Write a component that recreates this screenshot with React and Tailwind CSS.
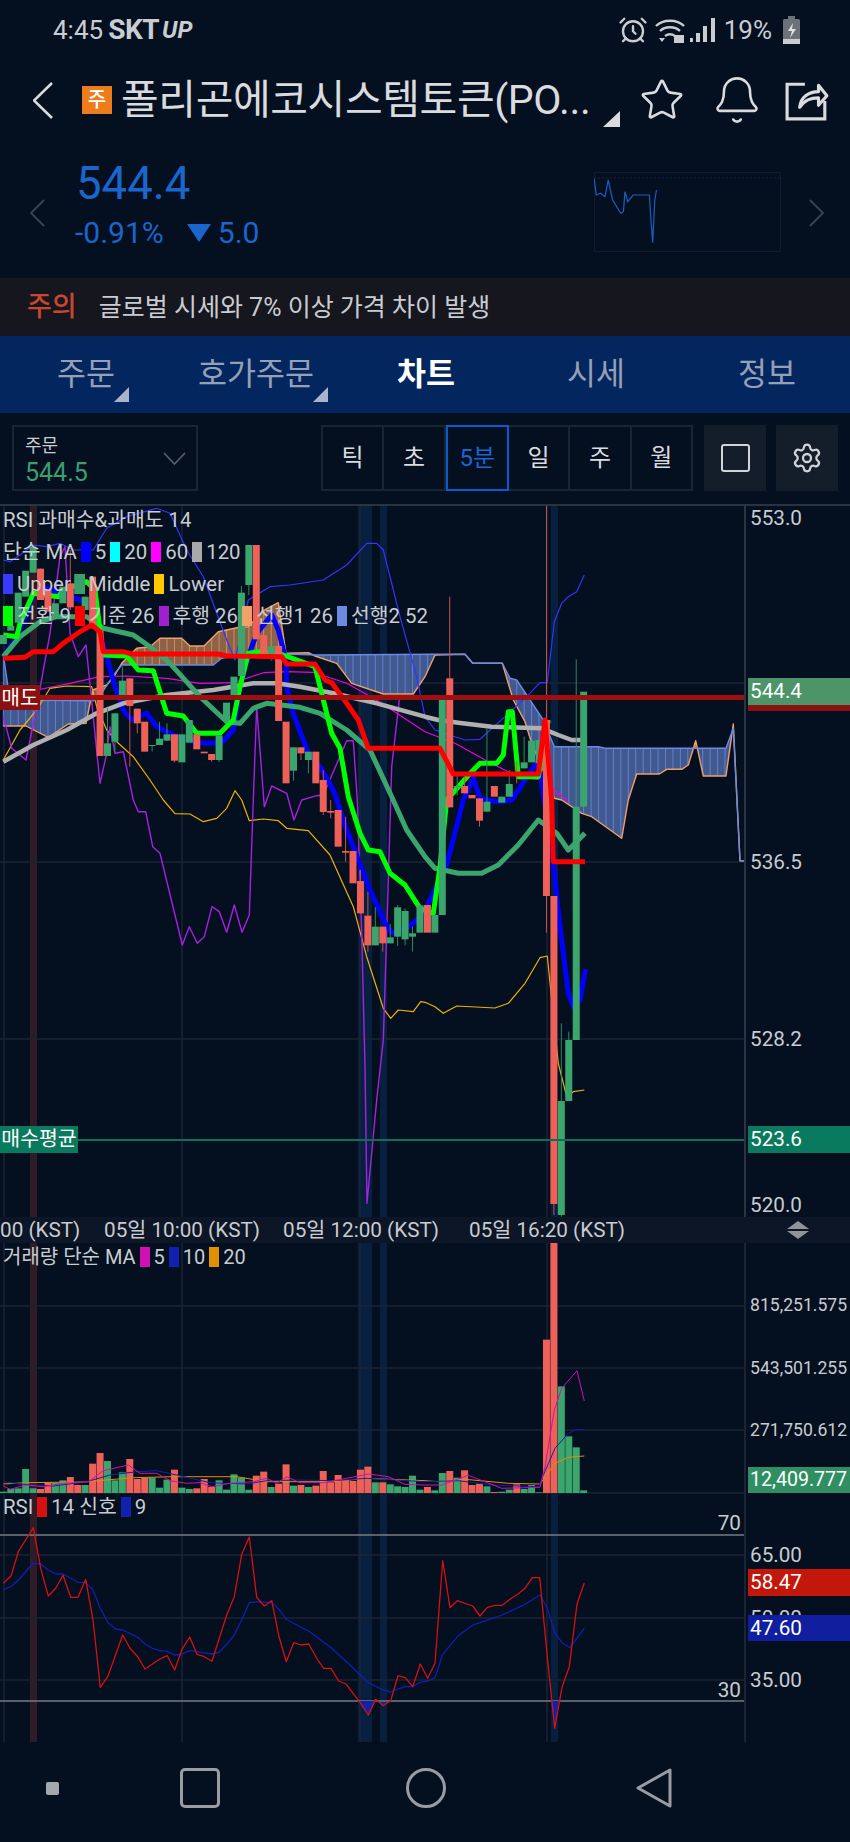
import { AlarmClock, Bell, Settings, Star } from "lucide-react";

const GREEN = "#3ba56e";
const RED = "#ee6158";

// chart data was read off 3x crops: page x = zx / 3, page y = 500 + zy / 3
const r = (pts) => pts.map(([x, y]) => [x + 1275, y]);
const slotX = (i) => 10 + 22.32 * i;
const toPoints = (pts, originY = 500) =>
  pts.map(([x, y]) => `${(x / 3).toFixed(1)},${(originY + y / 3).toFixed(1)}`).join(" ");

function yAt(pts, x) {
  if (x <= pts[0][0]) return pts[0][1];
  for (let i = 1; i < pts.length; i++) {
    if (x <= pts[i][0]) {
      const [x0, y0] = pts[i - 1];
      const [x1, y1] = pts[i];
      return y0 + ((y1 - y0) * (x - x0)) / (x1 - x0 || 1);
    }
  }
  return pts[pts.length - 1][1];
}

const lead1 = [
  [10, 678], [78, 678], [145, 712], [205, 672], [258, 670], [278, 570], [320, 555], [345, 525], [365, 490], [410, 445],
  [450, 440], [480, 415], [545, 415], [570, 438], [612, 438], [655, 395], [718, 382], [745, 380], [790, 332], [835, 308],
  [858, 460], [925, 458], [945, 468], [1010, 490], [1055, 550], [1150, 582], [1240, 582], [1275, 530],
  ...r([[30, 465], [120, 463], [143, 490], [232, 490], [265, 600], [300, 665], [320, 730], [388, 895], [410, 900], [470, 940], [500, 950], [590, 1015], [610, 900], [635, 822], [703, 822], [725, 808], [770, 808], [790, 795], [812, 722], [835, 828], [903, 828], [925, 672], [945, 1082], [958, 1082]]),
];
const lead2 = [
  [10, 465], [30, 600], [280, 602], [310, 572], [345, 520], [365, 495], [640, 495], [665, 475], [720, 465], [860, 462], [950, 465],
  ...r([[30, 463], [120, 463], [143, 490], [232, 490], [255, 535], [275, 540], [315, 600], [355, 660], [388, 740], [520, 740], [540, 745], [903, 745], [925, 685], [945, 1082], [958, 1082]]),
];

const ma5 = [
  [10, 470], [45, 420], [80, 340], [100, 285], [130, 262], [210, 290], [240, 300], [270, 310], [300, 400], [320, 470], [345, 560], [370, 630], [395, 660], [440, 640], [470, 680], [520, 705], [580, 725], [620, 730], [665, 728], [700, 690], [720, 560], [745, 470], [770, 400], [815, 345], [835, 390], [858, 480], [860, 560], [880, 640], [925, 760], [960, 800], [1000, 870], [1040, 990], [1075, 1080], [1110, 1170], [1160, 1280], [1180, 1300], [1230, 1278], [1260, 1250],
  ...r([[0, 1230], [65, 1095], [115, 900], [145, 835], [165, 895], [215, 905], [260, 900], [340, 780], [385, 1090], [405, 1280], [430, 1480], [445, 1520], [465, 1500], [482, 1408]]),
];
const tenkan = [
  [10, 405], [50, 410], [60, 370], [100, 280], [175, 290], [190, 270], [260, 245], [285, 270], [300, 390], [310, 465], [380, 468], [415, 510], [460, 512], [500, 640], [550, 648], [590, 700], [660, 700], [700, 660], [720, 560], [745, 460], [780, 455], [810, 458], [850, 465], [945, 500], [975, 620], [995, 700], [1020, 745], [1045, 890], [1080, 1000], [1105, 1050], [1140, 1055], [1170, 1120], [1215, 1155], [1260, 1225],
  ...r([[25, 1240], [45, 1100], [65, 900], [140, 815], [165, 790], [215, 790], [235, 765], [250, 635], [262, 635], [280, 830], [340, 830], [370, 660]]),
];
const kijun = [
  [10, 475], [75, 472], [100, 455], [160, 455], [190, 430], [240, 395], [275, 375], [300, 395], [310, 455], [370, 455], [395, 462], [655, 462], [680, 468], [845, 470], [860, 492], [945, 492], [975, 540], [995, 548], [1040, 610], [1075, 660], [1105, 745],
  ...r([[45, 745], [85, 822], [340, 822], [360, 660], [380, 900], [385, 1085], [480, 1085]]),
];
const ma20 = [
  [10, 470], [60, 410], [120, 365], [170, 350], [260, 350], [310, 385], [400, 405], [450, 440], [510, 490], [600, 590], [680, 665], [720, 670], [760, 625], [800, 610], [900, 622], [960, 640], [1040, 690], [1110, 750], [1175, 890], [1220, 990], [1275, 1070],
  ...r([[30, 1105], [100, 1120], [170, 1120], [220, 1095], [280, 1035], [340, 960], [395, 1000], [430, 1050], [480, 1000]]),
];
const ma120 = [
  [10, 785], [100, 735], [200, 690], [290, 640], [370, 610], [500, 585], [640, 570], [760, 550], [830, 550], [900, 560], [1000, 580], [1130, 610], [1275, 650],
  ...r([[40, 660], [100, 668], [200, 680], [350, 685], [400, 705], [440, 720], [468, 720]]),
];
const ma60 = [
  [10, 590], [110, 570], [210, 550], [300, 530], [380, 528], [500, 535], [600, 550], [700, 548], [790, 518], [860, 515], [940, 517], [1040, 550], [1130, 600],
  ...r([[0, 695], [90, 730], [190, 785], [280, 830], [350, 840], [400, 880], [430, 905]]),
];
const upper = [
  [10, 180], [30, 185], [60, 165], [100, 135], [140, 140], [180, 130], [220, 150], [280, 150], [320, 85], [380, 50], [470, 25], [510, 40], [560, 150], [610, 230], [680, 420], [705, 480], [745, 300], [810, 260], [870, 255], [970, 240], [1040, 195], [1100, 130], [1130, 130], [1150, 150], [1200, 350], [1250, 530],
  ...r([[0, 650], [30, 690], [90, 710], [120, 720], [165, 718], [300, 595], [345, 548], [367, 548], [388, 365], [410, 310], [430, 290], [455, 275], [478, 225]]),
];
const lower = [
  [10, 780], [60, 690], [110, 630], [150, 565], [200, 558], [275, 560], [290, 620], [320, 690], [350, 725], [400, 770], [450, 840], [490, 900], [525, 941], [570, 942], [610, 965], [650, 955], [680, 925], [705, 872], [725, 900], [748, 962], [790, 957], [835, 962], [860, 985], [925, 992], [990, 1065], [1060, 1220], [1100, 1370], [1150, 1525], [1172, 1555], [1195, 1530], [1240, 1535], [1262, 1505],
  ...r([[0, 1507], [30, 1520], [55, 1540], [95, 1518], [210, 1524], [250, 1510], [300, 1450], [345, 1373], [367, 1368], [380, 1500], [400, 1690], [425, 1790], [445, 1775], [478, 1770]]),
];
const lagging = [
  [10, 650], [35, 745], [78, 780], [110, 620], [150, 400], [180, 170], [195, 140], [210, 400], [235, 470], [258, 435], [300, 850], [318, 770], [330, 680], [345, 760], [370, 755], [400, 900], [415, 935], [437, 935], [458, 1040], [480, 1060], [547, 1335], [568, 1280], [592, 1330], [613, 1310], [636, 1220], [658, 1235], [680, 1297], [703, 1215], [726, 1297], [748, 1245], [760, 900], [770, 620], [793, 920], [815, 858], [860, 880], [882, 960], [905, 900], [950, 887], [970, 885], [1040, 722], [1060, 722], [1072, 900], [1085, 1300], [1095, 1700], [1101, 2110], [1130, 1800], [1150, 1620], [1160, 1300], [1175, 800], [1198, 600],
];

// [bodyTop, bodyBottom, colour, wickTop, wickBottom]
const candles = [
  [405, 432, "g"], [378, 392, "g"], [278, 368, "g"], [212, 290, "g"], [140, 218, "g"], [206, 300, "r", 206, 300], [270, 335, "r"], [310, 350, "g"], [260, 310, "g"], [250, 322, "r", 150, 330],
  [222, 282, "g"], [290, 330, "g"], [230, 385, "r"], [392, 768, "r"], [730, 768, "g", 625, 768], [640, 725, "g", 640, 755], [542, 585, "g", 500, 590], [535, 618, "r", 535, 800], [626, 670, "r", 626, 700], [665, 755, "r"],
  [735, 738, "g", 735, 755], [716, 735, "g", 665, 735], [703, 722, "g", 670, 722], [703, 782, "r", 703, 787], [703, 787, "g"], [660, 728, "g"], [703, 748, "r"], [755, 760, "r"], [762, 780, "r", 762, 785], [706, 780, "g", 706, 786],
  [608, 660, "g"], [530, 585, "g"], [278, 528, "g", 258, 528], [135, 255, "g", 135, 285], [135, 418, "r"], [405, 470, "r"], [438, 470, "g", 438, 482], [438, 663, "r"], [665, 850, "r"], [742, 812, "g", 742, 842],
  [742, 760, "r", 742, 780], [755, 780, "g", 755, 820], [755, 850, "r"], [840, 936, "r", 810, 945], [933, 938, "r", 900, 955], [930, 1040, "r"], [1053, 1058, "r", 950, 1085], [1053, 1150, "r"], [1143, 1240, "r", 1110, 1240], [1247, 1336, "r", 1175, 1355],
  [1280, 1336, "g", 1222, 1336], [1280, 1330, "r", 1280, 1355], [1312, 1330, "g", 1272, 1330], [1222, 1310, "g", 1215, 1338], [1233, 1318, "g", 1225, 1336], [1300, 1310, "g", 1280, 1355], [1216, 1298, "g"], [1215, 1298, "r"], [1245, 1298, "g"], [600, 1245, "g"],
  [535, 922, "r", 290, 922], [858, 862, "g", 820, 885], [858, 880, "r", 825, 880], [885, 895, "r"], [895, 962, "r", 895, 980], [905, 935, "g", 685, 935], [858, 890, "r"], [890, 908, "g"], [852, 890, "g", 810, 890], [820, 824, "r", 785, 850],
  [787, 805, "g", 710, 805], [722, 787, "g"], [720, 790, "g"], [660, 1188, "r", 18, 1298], [1188, 2112, "r", 1188, 2145], [1803, 2145, "g", 1570, 2150], [1620, 1803, "g", 1595, 1803], [920, 1620, "g", 478, 1620], [575, 920, "g"],
];

const volumeHeights = [
  4, 12, 14, 72, 14, 12, 32, 30, 38, 48, 24, 24, 88, 120, 96, 38, 62, 102, 42, 45, 46, 16, 40, 70, 16, 12, 14, 42, 18, 38,
  10, 56, 46, 10, 52, 64, 18, 28, 86, 22, 24, 18, 22, 66, 32, 54, 38, 36, 70, 79, 32, 32, 26, 20, 18, 52, 10,
  18, 8, 60, 66, 46, 68, 24, 28, 20, 3, 4, 10, 26, 12, 24, 2, 460, 760, 320, 170, 137, 8,
];
const volumeColours = "gggggrrggrrgrrgggrrrgggrggrrrgggggrrgrrgrgrrrrrrrrgrgggggrggrgrrrgrggrgggrrgggg";

const volMa5 = [
  [10, 858], [30, 868], [80, 855], [130, 860], [190, 850], [265, 845], [310, 812], [385, 795], [420, 820], [470, 820], [510, 842], [560, 850], [600, 848], [635, 860], [690, 850], [760, 845], [800, 835], [830, 850], [860, 830], [900, 848], [970, 848], [1040, 835], [1105, 822], [1165, 830], [1215, 853],
  ...r([[0, 855], [50, 855], [130, 826], [230, 865], [345, 862], [360, 800], [388, 630], [410, 565], [456, 512], [478, 603]]),
];
const volMa10 = [
  [10, 845], [60, 852], [160, 858], [260, 845], [330, 825], [410, 815], [470, 812], [530, 825], [630, 848], [740, 852], [800, 842], [900, 840], [1000, 842], [1100, 835],
  ...r([[0, 845], [100, 842], [200, 855], [340, 860], [390, 745], [430, 700], [456, 688], [478, 689]]),
];
const volMa20 = [
  [10, 852], [80, 848], [250, 846], [400, 833], [520, 830], [710, 830], [800, 845], [1000, 845], [1100, 835],
  ...r([[0, 842], [40, 845], [120, 838], [250, 850], [345, 852], [390, 790], [430, 772], [478, 768]]),
];

const rsiLine = [
  [10, 280], [33, 258], [55, 185], [100, 113], [122, 235], [145, 318], [167, 295], [189, 256], [212, 322], [234, 322], [257, 268], [279, 390], [301, 592], [323, 560], [368, 435], [390, 475], [413, 500], [435, 537], [480, 507], [502, 497], [524, 540], [546, 478], [569, 441], [591, 493], [613, 500], [636, 514], [680, 375], [703, 320], [725, 193], [748, 141], [770, 322], [793, 348], [815, 332], [837, 440], [859, 515], [881, 458], [903, 465], [926, 462], [950, 505], [971, 535], [993, 535], [1016, 573], [1038, 582], [1082, 640], [1105, 675], [1127, 628], [1150, 647], [1172, 632], [1194, 557], [1216, 563], [1238, 590], [1261, 522],
  ...r([[8, 565], [30, 520], [53, 212], [75, 353], [97, 332], [143, 348], [165, 378], [187, 352], [210, 346], [232, 346], [255, 328], [278, 313], [300, 295], [322, 263], [344, 263], [367, 500], [389, 715], [411, 592], [433, 530], [456, 343], [478, 279]]),
];
const rsiSignal = [
  [10, 298], [33, 290], [55, 270], [100, 220], [122, 222], [145, 240], [167, 252], [189, 252], [234, 277], [257, 278], [279, 300], [301, 355], [323, 397], [346, 417], [368, 420], [413, 442], [435, 462], [457, 475], [480, 482], [502, 484], [524, 495], [546, 492], [569, 482], [591, 485], [636, 492], [658, 486], [680, 463], [703, 435], [725, 390], [748, 338], [770, 335], [815, 338], [837, 358], [859, 388], [903, 412], [926, 423], [993, 473], [1050, 525], [1105, 578], [1150, 600], [1172, 606], [1194, 597], [1216, 590], [1238, 590], [1261, 577],
  ...r([[8, 573], [30, 563], [53, 493], [100, 437], [143, 405], [165, 398], [232, 375], [300, 343], [345, 315], [367, 355], [389, 428], [411, 458], [435, 473], [478, 415]]),
];

function cloudRuns() {
  const runs = [];
  let current = null;
  for (let x = 10; x <= 2233; x += 3) {
    const a = yAt(lead1, x);
    const b = yAt(lead2, x);
    const orange = a < b;
    if (!current || current.orange !== orange) {
      current = { orange, top: [], bottom: [] };
      runs.push(current);
    }
    current.top.push([x, Math.min(a, b)]);
    current.bottom.push([x, Math.max(a, b)]);
  }
  return runs;
}

// bands and vertical grid are shared by all three panes
function PaneBackdrop({ top, height }) {
  return (
    <g>
      <rect x="30" y={top} width="7" height={height} fill="#2f1c26" />
      <rect x="358" y={top} width="14" height={height} fill="#08203f" />
      <rect x="380" y={top} width="7" height={height} fill="#08203f" />
      <rect x="551" y={top} width="7" height={height} fill="#08203f" />
      {[4, 182, 360, 547].map((x) => (
        <line key={x} x1={x} x2={x} y1={top} y2={top + height} stroke="#1a2433" strokeWidth="1.5" />
      ))}
    </g>
  );
}

function Line({ pts, color, width = 1, origin = 500 }) {
  return <polyline points={toPoints(pts, origin)} fill="none" stroke={color} strokeWidth={width} strokeLinejoin="round" />;
}

function MainPlot() {
  const runs = cloudRuns();
  return (
    <svg className="block" width="744" height="711" viewBox="0 506 744 711">
      <PaneBackdrop top={506} height={711} />
      {[683, 862, 1039].map((y) => (
        <line key={y} x1="0" x2="744" y1={y} y2={y} stroke="#1a2433" strokeWidth="1.5" />
      ))}
      {runs.map((run, i) => (
        <polygon
          key={i}
          points={toPoints([...run.top, ...[...run.bottom].reverse()])}
          fill={run.orange ? "#8c6248" : "#41598f"}
        />
      ))}
      {Array.from({ length: 100 }, (_, i) => {
        const x = slotX(i);
        const a = yAt(lead1, x);
        const b = yAt(lead2, x);
        return (
          <line
            key={i}
            x1={x / 3}
            x2={x / 3}
            y1={500 + a / 3}
            y2={500 + b / 3}
            stroke={a < b ? "#e09a60" : "#6b8ae0"}
            strokeWidth="0.8"
          />
        );
      })}
      <Line pts={lead1} color="#f0a068" width={1.4} />
      <Line pts={lead2} color="#6b8ae0" width={1.4} />
      <Line pts={upper} color="#3434ff" width={1.2} />
      <Line pts={ma60} color="#f000e0" width={1.2} />
      <Line pts={lower} color="#f0b000" width={1.2} />
      <Line pts={lagging} color="#a820e0" width={1.4} />
      <Line pts={ma5} color="#0000ff" width={5} />
      <Line pts={ma120} color="#b0b0b0" width={4.5} />
      <Line pts={ma20} color={GREEN} width={5} />
      <Line pts={tenkan} color="#00ff00" width={5} />
      {candles.map(([top, bottom, c, wTop, wBottom], i) => {
        const x = slotX(i) / 3;
        const color = c === "g" ? GREEN : RED;
        return (
          <g key={i}>
            {wTop !== undefined && (
              <line x1={x} x2={x} y1={500 + wTop / 3} y2={500 + wBottom / 3} stroke={c === "g" ? "#2f8a5c" : "#c9524a"} />
            )}
            <rect x={x - 3.5} y={500 + top / 3} width="7" height={(bottom - top) / 3} fill={color} />
          </g>
        );
      })}
      <Line pts={kijun} color="#ff0000" width={5} />
      <rect x="0" y="695" width="744" height="5" fill="#a00f0f" />
      <rect x="0" y="1139" width="744" height="2" fill="#0f6e5a" />
    </svg>
  );
}

function VolumePlot() {
  return (
    <svg className="block" width="744" height="252" viewBox="0 1243 744 252">
      <PaneBackdrop top={1243} height={252} />
      {[1306, 1368, 1430, 1493].map((y) => (
        <line key={y} x1="0" x2="744" y1={y} y2={y} stroke="#1a2433" strokeWidth="1.5" />
      ))}
      {volumeHeights.map((h, i) => (
        <rect
          key={i}
          x={slotX(i) / 3 - 3.5}
          y={1493 - h / 3}
          width="7"
          height={h / 3}
          fill={volumeColours[i] === "g" ? GREEN : RED}
        />
      ))}
      <Line pts={volMa20} color="#e09000" origin={1200} />
      <Line pts={volMa10} color="#1020b0" origin={1200} />
      <Line pts={volMa5} color="#d010b0" origin={1200} />
    </svg>
  );
}

function RsiPlot() {
  return (
    <svg className="block" width="744" height="247" viewBox="0 1495 744 247">
      <PaneBackdrop top={1495} height={247} />
      {[1555, 1618, 1680].map((y) => (
        <line key={y} x1="0" x2="744" y1={y} y2={y} stroke="#1a2433" strokeWidth="1.5" />
      ))}
      <line x1="0" x2="744" y1="1535" y2="1535" stroke="#777c82" strokeWidth="1.5" />
      <line x1="0" x2="744" y1="1701" y2="1701" stroke="#777c82" strokeWidth="1.5" />
      <polygon points={toPoints([[1075, 633], [1105, 675], [1127, 633]], 1490)} fill="#1122aa" />
      <polygon points={toPoints([[1140, 636], [1150, 647], [1165, 636]], 1490)} fill="#1122aa" />
      <polygon points={toPoints(r([[378, 633], [389, 715], [402, 633]]), 1490)} fill="#1122aa" />
      <Line pts={rsiSignal} color="#1020b0" width={1.3} origin={1490} />
      <Line pts={rsiLine} color="#d81010" width={1.3} origin={1490} />
    </svg>
  );
}

function Swatch({ className }) {
  return <span className={`inline-block h-[20px] w-[10px] shrink-0 ${className}`} />;
}

function ChartLegend() {
  return (
    <div className="absolute left-[3px] top-[4px] flex flex-col gap-[12px] text-[20.4px] leading-[20px] text-[#c8ccd0]">
      <div className="h-[20px]">RSI 과매수&과매도 14</div>
      <div className="flex h-[20px] items-center gap-[4px]">
        <span>단순 MA</span>
        <Swatch className="bg-[#0000ff]" />
        <span>5</span>
        <Swatch className="bg-[#00ffff]" />
        <span>20</span>
        <Swatch className="bg-[#ff00ff]" />
        <span>60</span>
        <Swatch className="bg-[#a9a9a9]" />
        <span>120</span>
      </div>
      <div className="flex h-[20px] items-center gap-[4px]">
        <Swatch className="bg-[#3a3aff]" />
        <span>Upper</span>
        <Swatch className="bg-[#3a9e6e]" />
        <span>Middle</span>
        <Swatch className="bg-[#ffc800]" />
        <span>Lower</span>
      </div>
      <div className="flex h-[20px] items-center gap-[4px]">
        <Swatch className="bg-[#00ff00]" />
        <span>전환 9</span>
        <Swatch className="bg-[#ff0000]" />
        <span>기준 26</span>
        <Swatch className="bg-[#a020d0]" />
        <span>후행 26</span>
        <Swatch className="bg-[#f0a068]" />
        <span>선행1 26</span>
        <Swatch className="bg-[#6b8ae0]" />
        <span>선행2 52</span>
      </div>
    </div>
  );
}

function AxisLabel({ className, children }) {
  return (
    <span className={`absolute left-[4px] -translate-y-1/2 whitespace-nowrap leading-none text-[#c8ccd0] ${className}`}>
      {children}
    </span>
  );
}

function AxisTag({ className, children }) {
  return (
    <div className={`absolute left-[2px] right-0 flex items-center pl-[2px] leading-none text-white ${className}`}>
      {children}
    </div>
  );
}

function Chevron({ className, width, height, color, strokeWidth, flip }) {
  return (
    <svg className={`shrink-0 ${className}`} width={width} height={height} viewBox={`0 0 ${width} ${height}`} fill="none" stroke={color} strokeWidth={strokeWidth}>
      <polyline
        points={
          flip
            ? `1,1 ${width - 1},${height / 2} 1,${height - 1}`
            : `${width - 1},1 1,${height / 2} ${width - 1},${height - 1}`
        }
      />
    </svg>
  );
}

function StatusBar() {
  return (
    <div className="flex h-[60px] items-center pl-[53px] pr-[50px] text-[#c9ccd1]">
      <span className="text-[26px]">4:45</span>
      <span className="ml-[5px] text-[28px] font-bold tracking-[-0.5px]">SKT</span>
      <span className="ml-[3px] text-[24px] font-bold italic">UP</span>
      <div className="ml-auto flex items-center">
        <AlarmClock size={30} strokeWidth={1.9} />
        <svg className="ml-[6px]" width="32" height="28" viewBox="0 0 32 28" fill="none" stroke="currentColor" strokeWidth="2.4">
          <path d="M2 10c7-7 21-7 28 0" />
          <path d="M6 15c5-5 15-5 20 0" />
          <path d="M11 20c3-2 7-2 10 0" />
          <rect x="20" y="19" width="10" height="8" fill="currentColor" stroke="none" />
          <path d="M5 22h6l-3 4z" fill="currentColor" stroke="none" />
        </svg>
        <svg className="ml-[4px]" width="26" height="26" viewBox="0 0 26 26" fill="currentColor">
          <rect x="0" y="21" width="3" height="4" />
          <rect x="6" y="16" width="4" height="9" />
          <rect x="13" y="9" width="4" height="16" />
          <rect x="21" y="1" width="4" height="24" />
        </svg>
        <span className="ml-[8px] text-[26px]">19%</span>
        <svg className="ml-[11px]" width="17" height="28" viewBox="0 0 17 28">
          <rect x="5" y="0" width="7" height="3" fill="#6d7178" />
          <rect x="0" y="3" width="17" height="25" rx="1.5" fill="#6d7178" />
          <rect x="0" y="23" width="17" height="5" fill="#c9ccd1" />
          <path d="M10 7l-5 8h4l-2 7 6-9H9z" fill="#dfe1e4" />
        </svg>
      </div>
    </div>
  );
}

function Header() {
  return (
    <div className="flex h-[80px] items-center text-[#d9dbdf]">
      <Chevron className="ml-[33px]" width={20} height={37} color="#d9dbdf" strokeWidth={2.6} />
      <span className="ml-[29px] flex h-[28px] w-[30px] shrink-0 items-center justify-center bg-[#ee7c1b] text-[20px] font-medium leading-none text-white">
        주
      </span>
      <span className="relative ml-[9px] w-[470px] whitespace-nowrap text-[41px] leading-none tracking-[-0.4px]">
        폴리곤에코시스템토큰(PO...
      </span>
      <span className="ml-[12px] mt-[37px] h-0 w-0 border-b-[16px] border-l-[17px] border-b-[#d9dbdf] border-l-transparent" />
      <Star className="ml-[19px] shrink-0" size={46} strokeWidth={2.6} absoluteStrokeWidth />
      <Bell className="ml-[26px] shrink-0" size={52} strokeWidth={2.6} absoluteStrokeWidth />
      <svg className="ml-[22px] shrink-0" width="44" height="42" viewBox="0 0 42 40" fill="none" stroke="currentColor" strokeWidth="3">
        <path d="M19 5H2v33h36V21" />
        <path d="M14 27c1-10 9-15 18-15V6l8 10-8 9v-7c-8 0-13 2-18 9z" strokeLinejoin="round" />
      </svg>
    </div>
  );
}

function PriceRow() {
  const spark = [[1098, 535], [1102, 585], [1110, 580], [1118, 590], [1124, 540], [1132, 600], [1147, 640], [1152, 635], [1155, 575], [1160, 605], [1170, 585], [1200, 585], [1202, 640], [1206, 728], [1210, 600], [1213, 570]];
  return (
    <div className="flex h-[138px] items-start text-[#1a66cc]">
      <Chevron className="ml-[30px] mt-[59px]" width={15} height={28} color="#3a4452" strokeWidth={1.8} />
      <div className="ml-[30px] flex flex-col">
        <span className="ml-[1px] mt-[21px] text-[45.5px] leading-[46px]">544.4</span>
        <div className="mt-[11px] flex items-center text-[30px] leading-[30px]">
          <span>-0.91%</span>
          <span className="ml-[23px] h-0 w-0 border-x-[12px] border-t-[18px] border-x-transparent border-t-[#1a66cc]" />
          <span className="ml-[7px]">5.0</span>
        </div>
      </div>
      <svg className="ml-auto mt-[32px] shrink-0" width="187" height="80" viewBox="0 0 187 80" fill="none">
        <rect x="0.5" y="0.5" width="186" height="79" stroke="#101c2d" />
        <line x1="0" x2="187" y1="6" y2="6" stroke="#15233a" strokeDasharray="2 2" />
        <polyline
          points={spark.map(([x, y]) => `${(x / 1.845 - 595).toFixed(1)},${(y / 3 - 172).toFixed(1)}`).join(" ")}
          stroke="#1a5fc4"
          strokeWidth="1.2"
        />
      </svg>
      <Chevron className="ml-[28px] mr-[26px] mt-[59px]" width={15} height={28} color="#3a4452" strokeWidth={1.8} flip />
    </div>
  );
}

function TabTriangle() {
  return <span className="absolute bottom-[-12px] right-[-15px] h-0 w-0 border-b-[15px] border-l-[15px] border-b-[#a9b4cc] border-l-transparent" />;
}

function Tabs() {
  return (
    <div className="flex h-[77px] items-center bg-[#04265e] pl-[57px] text-[31.5px] leading-none text-[#94a0b8]">
      <span className="relative w-[57px] whitespace-nowrap">
        주문
        <TabTriangle />
      </span>
      <span className="relative ml-[84px] w-[115px] whitespace-nowrap">
        호가주문
        <TabTriangle />
      </span>
      <span className="ml-[84px] w-[56px] whitespace-nowrap font-bold text-white">차트</span>
      <span className="ml-[114px] w-[56px] whitespace-nowrap">시세</span>
      <span className="ml-[115px] w-[56px] whitespace-nowrap">정보</span>
    </div>
  );
}

function Toolbar() {
  const cells = ["틱", "초", "5분", "일", "주", "월"];
  return (
    <div className="flex h-[91px] items-center pb-[1px] pl-[12px]">
      <div className="relative h-[66px] w-[186px] border-2 border-[#1a2532] pl-[11px]">
        <div className="mt-[9px] text-[18px] leading-[20px] text-[#c8ccd0]">주문</div>
        <div className="mt-[3px] text-[25px] leading-[28px] text-[#3a9e6e]">544.5</div>
        <svg className="absolute right-[10px] top-[25px]" width="23" height="13" viewBox="0 0 23 13" fill="none" stroke="#5a626d" strokeWidth="1.6">
          <polyline points="1,1 11.5,12 22,1" />
        </svg>
      </div>
      <div className="ml-[123px] flex h-[66px] w-[372px] border-2 border-[#1a2532]">
        {cells.map((cell) => (
          <div
            key={cell}
            className={
              cell === "5분"
                ? "-my-[2px] flex flex-1 items-center justify-center border-2 border-[#0a5bd0] text-[24px] text-[#1a66cc]"
                : "flex flex-1 items-center justify-center border-r-2 border-[#1a2532] text-[24px] text-[#d9dbdf] last:border-r-0"
            }
          >
            {cell}
          </div>
        ))}
      </div>
      <div className="ml-[11px] flex h-[66px] w-[62px] items-center justify-center bg-[#141d2a]">
        <span className="h-[28px] w-[29px] rounded-[3px] border-2 border-[#d0d3d7]" />
      </div>
      <div className="ml-[10px] flex h-[66px] w-[62px] items-center justify-center bg-[#141d2a] text-[#d0d3d7]">
        <Settings size={32} strokeWidth={1.7} />
      </div>
    </div>
  );
}

function NavBar() {
  return (
    <div className="flex h-[100px] items-center pb-[8px] pl-[46px]">
      <span className="h-[13px] w-[13px] rounded-[2px] bg-[#a5a7ae]" />
      <span className="ml-[121px] h-[40px] w-[40px] rounded-[5px] border-[3px] border-[#9a9ca3]" />
      <span className="ml-[186px] h-[40px] w-[40px] rounded-full border-[3px] border-[#9a9ca3]" />
      <svg className="ml-[190px]" width="36" height="40" viewBox="0 0 36 40" fill="none" stroke="#9a9ca3" strokeWidth="3" strokeLinejoin="round">
        <path d="M34 2v36L2 20z" />
      </svg>
    </div>
  );
}

export default function App() {
  return (
    <div className="h-[1842px] w-[850px] overflow-hidden bg-[#040f20] font-['Roboto','Noto_Sans_CJK_KR',sans-serif]">
      <StatusBar />
      <Header />
      <PriceRow />
      <div className="flex h-[58px] items-center gap-[22px] bg-[#16161f] pl-[27px] leading-none">
        <span className="text-[27px] font-medium text-[#c8472e]">주의</span>
        <span className="text-[25px] text-[#c9ccd1]">글로벌 시세와 7% 이상 가격 차이 발생</span>
      </div>
      <Tabs />
      <Toolbar />
      <div className="h-[2px] bg-[#2a3340]" />

      <div className="flex h-[711px]">
        <div className="relative w-[744px]">
          <MainPlot />
          <ChartLegend />
          <span className="absolute left-0 top-[179px] flex h-[25px] w-[40px] items-center justify-center bg-[#8b1111] text-[20px] leading-none text-white">
            매도
          </span>
          <span className="absolute left-0 top-[620px] flex h-[27px] w-[78px] items-center justify-center bg-[#0a7a5e] text-[20.5px] leading-none text-white">
            매수평균
          </span>
        </div>
        <div className="relative w-[106px] border-l-2 border-[#2a3442]">
          <AxisLabel className="top-[12px] text-[20.7px]">553.0</AxisLabel>
          <AxisLabel className="top-[356px] text-[20.7px]">536.5</AxisLabel>
          <AxisLabel className="top-[533px] text-[20.7px]">528.2</AxisLabel>
          <AxisLabel className="top-[699px] text-[20.7px]">520.0</AxisLabel>
          <AxisLabel className="top-[180px] text-[20.7px]">544.2</AxisLabel>
          <AxisTag className="top-[172px] h-[27px] bg-[#4d9468] text-[20.7px]">544.4</AxisTag>
          <div className="absolute left-[2px] right-0 top-[199px] h-[6px] bg-[#8b1111]" />
          <AxisTag className="top-[620px] h-[27px] bg-[#0a7a5e] text-[20.7px]">523.6</AxisTag>
        </div>
      </div>

      <div className="flex h-[26px] items-center bg-[#0c1626] text-[20.7px] leading-none text-[#c8ccd0]">
        <span className="w-[104px] whitespace-nowrap">00 (KST)</span>
        <span className="w-[179px] whitespace-nowrap">05일 10:00 (KST)</span>
        <span className="w-[186px] whitespace-nowrap">05일 12:00 (KST)</span>
        <span className="whitespace-nowrap">05일 16:20 (KST)</span>
        <svg className="ml-auto mr-[41px]" width="22" height="18" viewBox="0 0 22 18" fill="#8f949b">
          <path d="M11 0l11 8H0z" />
          <path d="M11 18L0 10h22z" />
        </svg>
      </div>

      <div className="flex h-[252px]">
        <div className="relative w-[744px]">
          <VolumePlot />
          <div className="absolute left-[3px] top-[4px] flex h-[20px] items-center gap-[4px] text-[20px] leading-[20px] text-[#c8ccd0]">
            <span>거래량 단순 MA</span>
            <Swatch className="bg-[#d010b0]" />
            <span>5</span>
            <Swatch className="bg-[#1020b0]" />
            <span>10</span>
            <Swatch className="bg-[#e09000]" />
            <span>20</span>
          </div>
        </div>
        <div className="relative w-[106px] border-l-2 border-[#1a2433]">
          <AxisLabel className="top-[63px] text-[17.6px]">815,251.575</AxisLabel>
          <AxisLabel className="top-[126px] text-[17.6px]">543,501.255</AxisLabel>
          <AxisLabel className="top-[188px] text-[17.6px]">271,750.612</AxisLabel>
          <AxisTag className="top-[224px] h-[26px] bg-[#2f8f62] text-[19.6px]">12,409.777</AxisTag>
        </div>
      </div>

      <div className="flex h-[247px]">
        <div className="relative w-[744px]">
          <RsiPlot />
          <div className="absolute left-[3px] top-[2px] flex h-[20px] items-center gap-[4px] text-[20.4px] leading-[20px] text-[#c8ccd0]">
            <span>RSI</span>
            <Swatch className="bg-[#d81010]" />
            <span>14 신호</span>
            <Swatch className="bg-[#1020b0]" />
            <span>9</span>
          </div>
          <span className="absolute right-[3px] top-[18px] text-[20.7px] leading-[20px] text-[#c8ccd0]">70</span>
          <span className="absolute right-[3px] top-[185px] text-[20.7px] leading-[20px] text-[#c8ccd0]">30</span>
        </div>
        <div className="relative w-[106px] border-l-2 border-[#1a2433]">
          <AxisLabel className="top-[60px] text-[20.7px]">65.00</AxisLabel>
          <AxisLabel className="top-[123px] text-[20.7px]">50.00</AxisLabel>
          <AxisLabel className="top-[185px] text-[20.7px]">35.00</AxisLabel>
          <AxisTag className="top-[74px] h-[27px] bg-[#c4170c] text-[20.7px]">58.47</AxisTag>
          <AxisTag className="top-[120px] h-[26px] bg-[#0f1fa0] text-[20.7px]">47.60</AxisTag>
        </div>
      </div>

      <NavBar />
    </div>
  );
}
